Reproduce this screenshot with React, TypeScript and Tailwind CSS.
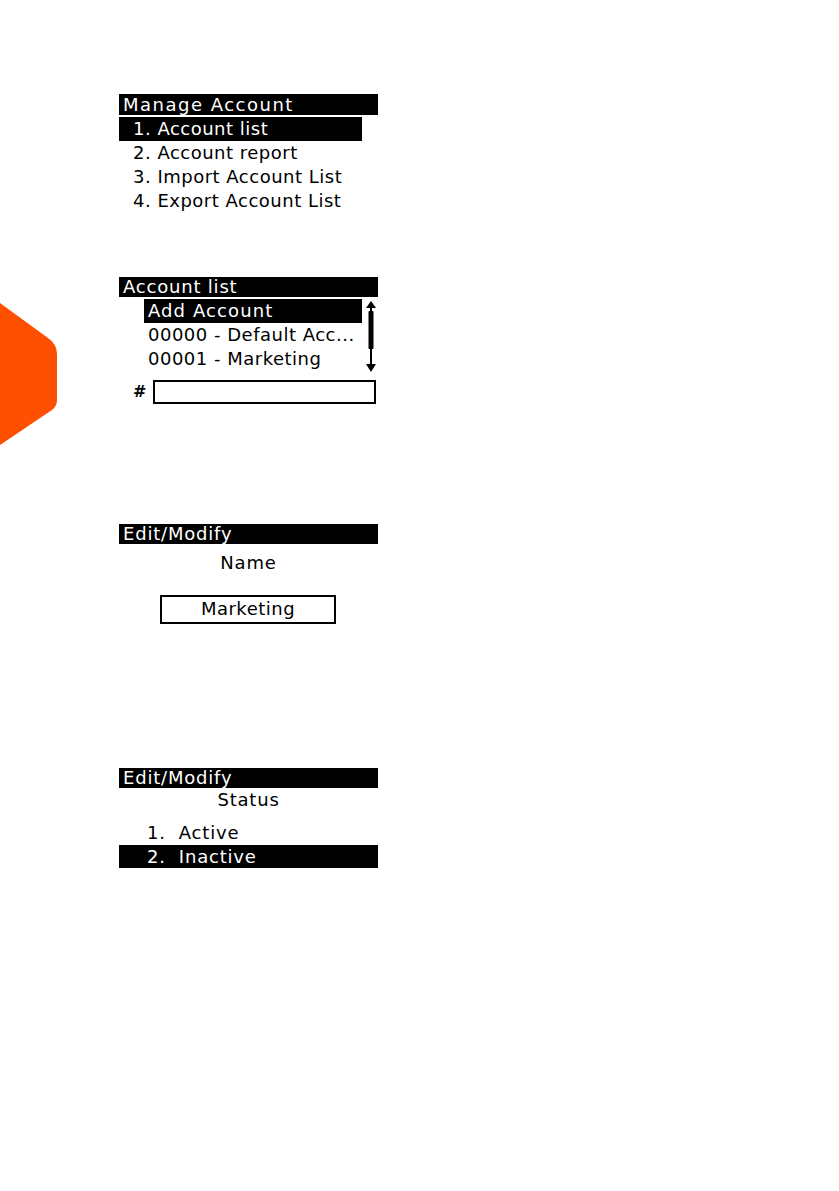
import React from "react";

const lcd = "font-['DejaVu_Sans',sans-serif] text-[18px] text-black";

function Header({ title, tall, wide }: { title: string; tall?: boolean; wide?: boolean }) {
  return (
    <div
      className={`flex items-center bg-black pl-[4px] text-white ${tall ? "h-[21px]" : "h-[20px]"} ${
        wide ? "tracking-[1.5px]" : "tracking-[0.8px]"
      }`}
    >
      <span className="leading-none">{title}</span>
    </div>
  );
}

function Row({ label, selected, width }: { label: string; selected?: boolean; width?: string }) {
  return (
    <div
      className={`flex h-[24px] items-center tracking-[0.5px] ${width ?? ""} ${
        selected ? "bg-black text-white" : ""
      }`}
    >
      <span className="leading-none">{label}</span>
    </div>
  );
}

function ScrollBar() {
  return (
    <svg width="16" height="72" viewBox="0 0 16 72" className="mt-[2px]">
      <polygon points="9,0 4,7 14,7" fill="#000" />
      <rect x="8" y="6" width="2" height="5" fill="#000" />
      <rect x="6.5" y="10" width="5" height="38" rx="1" fill="#000" />
      <rect x="8" y="47" width="2" height="17" fill="#000" />
      <polygon points="9,71 4,63 14,63" fill="#000" />
    </svg>
  );
}

function ManageAccount() {
  return (
    <div className="pt-[94px]">
      <Header title="Manage Account" tall wide />
      <div className="mt-[2px]">
        <div className="w-[243px] bg-black pl-[14px] text-white">
          <Row label="1. Account list" />
        </div>
        <div className="pl-[14px]">
          <Row label="2. Account report" />
          <Row label="3. Import Account List" />
          <Row label="4. Export Account List" />
        </div>
      </div>
    </div>
  );
}

function AccountList() {
  return (
    <div className="mt-[64px]">
      <Header title="Account list" />
      <div className="mt-[2px] flex">
        <div className="ml-[25px] w-[218px]">
          <div className="bg-black pl-[4px] text-white tracking-[1.1px]">
            <div className="flex h-[24px] items-center">
              <span className="leading-none">Add Account</span>
            </div>
          </div>
          <div className="pl-[4px]">
            <Row label="00000 - Default Acc..." />
            <Row label="00001 - Marketing" />
          </div>
        </div>
        <ScrollBar />
      </div>
      <div className="mt-[7px] flex items-center">
        <span className="ml-[14px] w-[20px] text-[16px] font-bold leading-none">#</span>
        <div className="h-[24px] w-[223px] border-2 border-black" />
      </div>
    </div>
  );
}

function EditName() {
  return (
    <div className="mt-[120px]">
      <Header title="Edit/Modify" />
      <div className="mt-[7px] flex h-[24px] items-center justify-center tracking-[0.8px]">
        <span className="leading-none">Name</span>
      </div>
      <div className="ml-[41px] mt-[20px] flex h-[29px] w-[176px] items-center justify-center border-2 border-black tracking-[0.5px]">
        <span className="-mt-[2px] leading-none">Marketing</span>
      </div>
    </div>
  );
}

function EditStatus() {
  return (
    <div className="mt-[144px]">
      <Header title="Edit/Modify" />
      <div className="flex h-[24px] items-center justify-center tracking-[0.8px]">
        <span className="leading-none">Status</span>
      </div>
      <div className="mt-[9px] flex h-[24px] items-center pl-[28px] tracking-[0.8px]">
        <span className="leading-none">1.&nbsp; Active</span>
      </div>
      <div className="flex h-[23px] items-center bg-black pl-[28px] text-white tracking-[0.8px]">
        <span className="leading-none">2.&nbsp; Inactive</span>
      </div>
    </div>
  );
}

export default function App() {
  return (
    <div className={`flex h-[1191px] w-[839px] overflow-hidden bg-white ${lcd}`}>
      <div className="w-[58px] shrink-0 pt-[303px]">
        <svg width="58" height="142" viewBox="0 0 58 142">
          <path
            d="M0 0 L48 35 Q57 41 57 51 L57 97 Q57 103 52 107 L0 142 Z"
            fill="#ff4f00"
          />
        </svg>
      </div>
      <div className="ml-[61px] w-[259px]">
        <ManageAccount />
        <AccountList />
        <EditName />
        <EditStatus />
      </div>
    </div>
  );
}
